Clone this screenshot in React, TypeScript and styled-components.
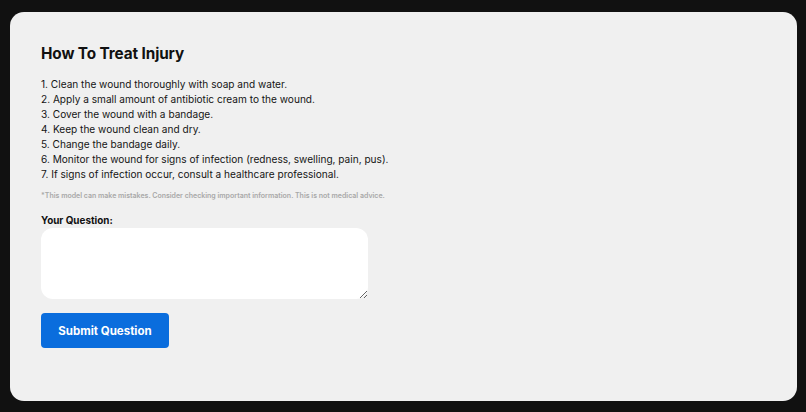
import styled, { createGlobalStyle } from 'styled-components';

const GlobalStyle = createGlobalStyle`
  html, body {
    margin: 0;
    padding: 0;
    background: #111111;
  }
  body {
    font-family: 'Inter', 'Liberation Sans', sans-serif;
  }
`;

const Page = styled.div`
  box-sizing: border-box;
  height: 412px;
  padding: 12px 9px 11px 10px;
`;

const Card = styled.main`
  box-sizing: border-box;
  height: 100%;
  background: #f0f0f0;
  border-radius: 14px;
  padding: 32px 31px;
  display: flex;
  flex-direction: column;
  align-items: flex-start;
`;

const Title = styled.h1`
  margin: 0 0 13px;
  font-size: 15.3px;
  line-height: 20px;
  font-weight: 700;
  color: #111;
  letter-spacing: -0.1px;
`;

const Steps = styled.div`
  font-size: 10.1px;
  line-height: 15px;
  color: #151515;
`;

const Disclaimer = styled.p`
  margin: 9px 0 12px;
  font-size: 7px;
  line-height: 10px;
  font-weight: 600;
  color: #a8a8a8;
`;

const Label = styled.label`
  font-size: 9.9px;
  line-height: 14px;
  font-weight: 700;
  color: #111;
  margin-bottom: 1px;
`;

const Question = styled.textarea`
  box-sizing: border-box;
  width: 327px;
  height: 71px;
  border: none;
  border-radius: 12px;
  background: #ffffff;
  padding: 8px 10px;
  font-family: inherit;
  font-size: 11px;
  outline: none;
`;

const SubmitButton = styled.button`
  margin-top: 14px;
  width: 128px;
  height: 35px;
  border: none;
  border-radius: 4px;
  background: #0a6ddd;
  color: #ffffff;
  font-family: inherit;
  font-size: 11.5px;
  font-weight: 700;
  cursor: pointer;
`;

const steps = [
  '1. Clean the wound thoroughly with soap and water.',
  '2. Apply a small amount of antibiotic cream to the wound.',
  '3. Cover the wound with a bandage.',
  '4. Keep the wound clean and dry.',
  '5. Change the bandage daily.',
  '6. Monitor the wound for signs of infection (redness, swelling, pain, pus).',
  '7. If signs of infection occur, consult a healthcare professional.',
];

export default function App() {
  return (
    <>
      <GlobalStyle />
      <Page>
        <Card>
          <Title>How To Treat Injury</Title>
          <Steps>
            {steps.map((s) => (
              <div key={s}>{s}</div>
            ))}
          </Steps>
          <Disclaimer>
            *This model can make mistakes. Consider checking important information. This is not medical advice.
          </Disclaimer>
          <Label htmlFor="question">Your Question:</Label>
          <Question id="question" />
          <SubmitButton>Submit Question</SubmitButton>
        </Card>
      </Page>
    </>
  );
}
